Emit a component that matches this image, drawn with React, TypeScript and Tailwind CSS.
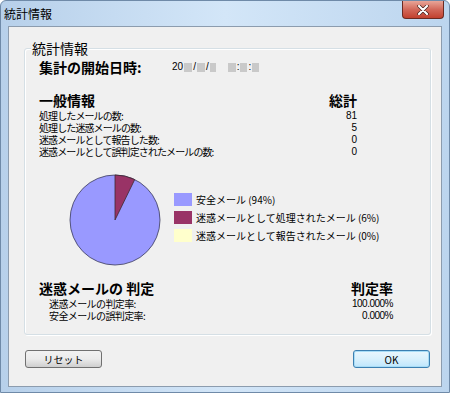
import React from 'react';

const jp = { fontFamily: '"Noto Sans CJK JP", "Liberation Sans", sans-serif' };
const num = { fontFamily: '"Liberation Sans", sans-serif' };

function Blur({ w }: { w: number }) {
  return <span className="inline-block h-[9px] bg-[#c9c9c9] blur-[0.6px] align-middle" style={{ width: w }} />;
}

function LegendRow({ color, label }: { color: string; label: string }) {
  return (
    <div className="flex items-center gap-[4px] h-[13px]">
      <div className={`w-[18px] h-[13px] ${color}`} />
      <span className="text-[10px] leading-[13px] text-black">{label}</span>
    </div>
  );
}

function PieChart() {
  const r = 45;
  const cx = 46;
  const cy = 46;
  const angle = (26 * Math.PI) / 180;
  const ex = cx + r * Math.sin(angle);
  const ey = cy - r * Math.cos(angle);
  return (
    <svg width="92" height="92" viewBox="0 0 92 92">
      <circle cx={cx} cy={cy} r={r} fill="#9999ff" stroke="#3a3a5a" strokeWidth="0.8" />
      <path d={`M${cx} ${cy} L${cx} ${cy - r} A${r} ${r} 0 0 1 ${ex} ${ey} Z`} fill="#993366" stroke="#3a2a30" strokeWidth="0.8" />
    </svg>
  );
}

function Button({ label, primary }: { label: string; primary?: boolean }) {
  return (
    <div
      className={`w-[77px] h-[18px] rounded-[3px] border flex items-center justify-center text-[10px] text-black bg-gradient-to-b ${
        primary
          ? 'border-[#3c7fb1] from-[#eaf6fd] via-[#d9f0fc] to-[#bee6fd] shadow-[inset_0_0_0_1px_#a8dcf6]'
          : 'border-[#707070] from-[#f2f2f2] via-[#ebebeb] to-[#cfcfcf]'
      }`}
    >
      {label}
    </div>
  );
}

export default function App() {
  const generalRows = [
    ['処理したメールの数:', '81'],
    ['処理した迷惑メールの数:', '5'],
    ['迷惑メールとして報告した数:', '0'],
    ['迷惑メールとして誤判定されたメールの数:', '0'],
  ];

  return (
    <div
      className="w-[450px] h-[393px] flex flex-col bg-gradient-to-r from-[#b7d0ea] via-[#d3e6f8] to-[#bcd5ee] border border-[#6f8aa8] rounded-t-[6px] overflow-hidden"
      style={jp}
    >
      {/* Title bar */}
      <div className="h-[25px] flex justify-between items-start">
        <span className="pl-[3px] pt-[6px] text-[12px] leading-[14px] text-black">統計情報</span>
        <div className="mr-[5px] w-[42px] h-[18px] rounded-b-[4px] border border-t-0 border-[#6b2a22] bg-gradient-to-b from-[#e8a598] via-[#d2685a] to-[#c2402e] flex items-center justify-center">
          <svg width="12" height="10" viewBox="0 0 12 10">
            <path d="M2 1 L10 9 M10 1 L2 9" stroke="#3a1a16" strokeWidth="3.4" strokeLinecap="round" />
            <path d="M2 1 L10 9 M10 1 L2 9" stroke="#ffffff" strokeWidth="2.2" strokeLinecap="round" />
          </svg>
        </div>
      </div>

      {/* Client area */}
      <div className="mx-[7px] mb-[5px] flex-1 border border-[#8c9cae] bg-[#f0f0f0] flex flex-col text-black">
        {/* Group box */}
        <div className="relative mt-[21px] ml-[15px] mr-[10px] h-[287px] border border-[#d5dfe5] rounded-[3px] shadow-[inset_1px_1px_0_#ffffff,1px_1px_0_#ffffff]">
          <span className="absolute -top-[9px] left-[6px] px-[1px] bg-[#f0f0f0] text-[14px] leading-[16px]">統計情報</span>

          <div className="pl-[14px] pt-[10px] flex flex-col">
            {/* Start date */}
            <div className="flex items-center h-[16px]">
              <span className="w-[133px] text-[14px] font-bold leading-[16px]">集計の開始日時:</span>
              <span className="flex items-center gap-[1px] text-[10px] leading-[16px]" style={num}>
                20<Blur w={8} />/<Blur w={8} />/<Blur w={6} />
                <span className="w-[10px]" />
                <Blur w={8} />:<Blur w={7} />:<Blur w={7} />
              </span>
            </div>

            {/* General info */}
            <div className="mt-[17px] w-[318px] flex justify-between">
              <div className="flex flex-col">
                <div className="text-[14px] font-bold leading-[16px] h-[18px]">一般情報</div>
                {generalRows.map(([label]) => (
                  <div key={label} className="h-[12px] text-[10px] leading-[12px] tracking-[-0.9px]">{label}</div>
                ))}
              </div>
              <div className="flex flex-col items-end">
                <div className="text-[14px] font-bold leading-[16px] h-[18px]">総計</div>
                {generalRows.map(([label, value]) => (
                  <div key={label} className="h-[12px] text-[10px] leading-[12px]" style={num}>{value}</div>
                ))}
              </div>
            </div>

            {/* Chart */}
            <div className="mt-[16px] ml-[30px] flex items-start">
              <PieChart />
              <div className="ml-[13px] mt-[19px] flex flex-col gap-[5px]">
                <LegendRow color="bg-[#9999ff]" label="安全メール (94%)" />
                <LegendRow color="bg-[#993366]" label="迷惑メールとして処理されたメール (6%)" />
                <LegendRow color="bg-[#ffffcc]" label="迷惑メールとして報告されたメール (0%)" />
              </div>
            </div>

            {/* Judgement */}
            <div className="mt-[14px] w-[354px] flex justify-between">
              <div className="flex flex-col">
                <div className="text-[14px] font-bold leading-[16px] h-[18px]">迷惑メールの 判定</div>
                <div className="h-[12px] pl-[10px] text-[10px] leading-[12px] tracking-[-0.6px]">迷惑メールの判定率:</div>
                <div className="h-[12px] pl-[10px] text-[10px] leading-[12px] tracking-[-0.6px]">安全メールの誤判定率:</div>
              </div>
              <div className="flex flex-col items-end">
                <div className="text-[14px] font-bold leading-[16px] h-[18px]">判定率</div>
                <div className="h-[12px] text-[10px] leading-[12px] tracking-[-0.5px]" style={num}>100.000%</div>
                <div className="h-[12px] text-[10px] leading-[12px] tracking-[-0.5px]" style={num}>0.000%</div>
              </div>
            </div>
          </div>
        </div>

        {/* Buttons */}
        <div className="mt-[15px] ml-[16px] mr-[11px] flex justify-between">
          <Button label="リセット" />
          <Button label="OK" primary />
        </div>
      </div>
    </div>
  );
}
